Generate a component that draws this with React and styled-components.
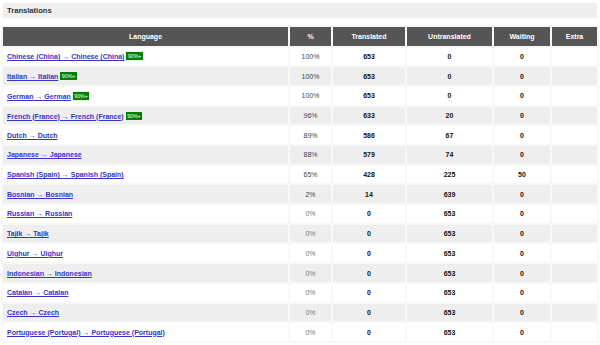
import React from "react";
import styled, { createGlobalStyle } from "styled-components";

const Global = createGlobalStyle`
  html, body { margin: 0; padding: 0; background: #fff; }
  body { font-family: "Liberation Sans", Arial, sans-serif; }
`;

const Page = styled.div`
  padding: 3px 3px 0 3px;
`;

const TitleBar = styled.div`
  background: #eeeeee;
  height: 15px;
  display: flex;
  align-items: center;
  padding-left: 4px;
  font-size: 7.6px;
  font-weight: bold;
  color: #333;
`;

const Table = styled.table`
  border-collapse: separate;
  border-spacing: 2px;
  background: #f8f8f8;
  width: 598px;
  margin: 7px 0 0 -2px;
  table-layout: fixed;
`;

const Th = styled.th`
  background: #555555;
  color: #fff;
  font-size: 7px;
  font-weight: bold;
  height: 18.6px;
  padding: 0;
  text-align: center;
  width: ${(p) => p.$w}px;
`;

const Row = styled.tr`
  background: ${(p) => (p.$alt ? "#eeeeee" : "#ffffff")};
`;

const Td = styled.td`
  height: 17.7px;
  padding: 0;
  font-size: 7px;
  text-align: center;
  font-weight: bold;
  color: #111;
  white-space: nowrap;
`;

const LangCell = styled(Td)`
  text-align: left;
  padding-left: 4px;
`;

const PctCell = styled(Td)`
  font-weight: normal;
  color: ${(p) => (p.$zero ? "#777" : "#444")};
`;

const LangLink = styled.a`
  color: #3535c8;
  text-decoration: underline;
  font-weight: bold;
  font-size: 7px;
  cursor: pointer;
`;

const Badge = styled.span`
  display: inline-block;
  background: #008000;
  color: #fff;
  font-size: 5.2px;
  font-weight: normal;
  line-height: 8px;
  padding: 0 1.5px;
  margin-left: 2px;
  vertical-align: 1px;
  outline: 1px solid #e9f3e9;
`;

const rows = [
  ["Chinese (China) → Chinese (China)", "100%", 653, 0, 0, true],
  ["Italian → Italian", "100%", 653, 0, 0, true],
  ["German → German", "100%", 653, 0, 0, true],
  ["French (France) → French (France)", "96%", 633, 20, 0, true],
  ["Dutch → Dutch", "89%", 586, 67, 0, false],
  ["Japanese → Japanese", "88%", 579, 74, 0, false],
  ["Spanish (Spain) → Spanish (Spain)", "65%", 428, 225, 50, false],
  ["Bosnian → Bosnian", "2%", 14, 639, 0, false],
  ["Russian → Russian", "0%", 0, 653, 0, false],
  ["Tajik → Tajik", "0%", 0, 653, 0, false],
  ["Uighur → Uighur", "0%", 0, 653, 0, false],
  ["Indonesian → Indonesian", "0%", 0, 653, 0, false],
  ["Catalan → Catalan", "0%", 0, 653, 0, false],
  ["Czech → Czech", "0%", 0, 653, 0, false],
  ["Portuguese (Portugal) → Portuguese (Portugal)", "0%", 0, 653, 0, false],
];

const cols = [
  ["Language", 285],
  ["%", 41],
  ["Translated", 72],
  ["Untranslated", 85],
  ["Waiting", 56],
  ["Extra", 45],
];

export default function App() {
  return (
    <>
      <Global />
      <Page>
        <TitleBar>Translations</TitleBar>
        <Table>
          <thead>
            <tr>
              {cols.map(([label, w]) => (
                <Th key={label} $w={w}>
                  {label}
                </Th>
              ))}
            </tr>
          </thead>
          <tbody>
            {rows.map(([lang, pct, tr, un, wait, badge], i) => (
              <Row key={lang} $alt={i % 2 === 1}>
                <LangCell>
                  <LangLink>{lang}</LangLink>
                  {badge && <Badge>90%+</Badge>}
                </LangCell>
                <PctCell $zero={pct === "0%"}>{pct}</PctCell>
                <Td>{tr}</Td>
                <Td>{un}</Td>
                <Td>{wait}</Td>
                <Td></Td>
              </Row>
            ))}
          </tbody>
        </Table>
      </Page>
    </>
  );
}
